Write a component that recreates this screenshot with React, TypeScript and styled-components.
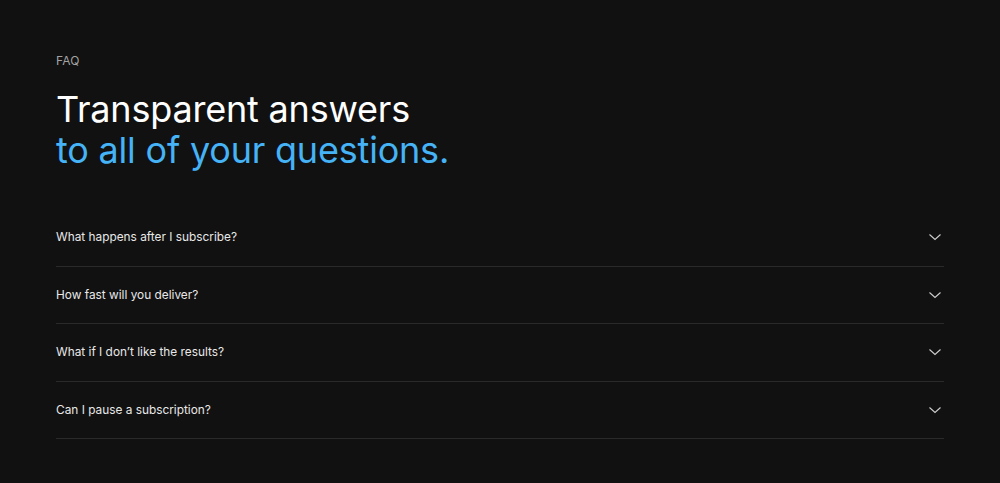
import React from "react";
import styled, { createGlobalStyle } from "styled-components";

const Global = createGlobalStyle`
  html, body { margin: 0; padding: 0; background: #111111; }
  body { font-family: Inter, "Noto Sans", sans-serif; -webkit-font-smoothing: antialiased; }
`;

const Section = styled.section`
  width: 1000px;
  height: 483px;
  box-sizing: border-box;
  background: #111111;
  padding: 53px 56px 0 56px;
`;

const Eyebrow = styled.div`
  font-size: 12px;
  line-height: 16px;
  color: #a3a3a3;
  letter-spacing: 0.2px;
`;

const Heading = styled.h2`
  margin: 20px 0 0 0;
  font-size: 36px;
  font-weight: 400;
  line-height: 41px;
  letter-spacing: -0.2px;
  color: #ffffff;
`;

const Accent = styled.span`
  display: block;
  color: #45b3f6;
`;

const List = styled.div`
  margin-top: 38px;
  display: flex;
  flex-direction: column;
`;

const Row = styled.div`
  height: 57.6px;
  box-sizing: border-box;
  border-bottom: 1px solid #2a2a2a;
  display: flex;
  align-items: center;
  justify-content: space-between;
`;

const Question = styled.span`
  font-size: 11.85px;
  color: #e8e8e8;
  letter-spacing: 0;
`;

const Chevron = styled.svg`
  width: 14px;
  height: 14px;
  margin-right: 2px;
  color: #cfcfcf;
`;

const questions = [
  "What happens after I subscribe?",
  "How fast will you deliver?",
  "What if I don’t like the results?",
  "Can I pause a subscription?",
];

export default function App() {
  return (
    <>
      <Global />
      <Section>
        <Eyebrow>FAQ</Eyebrow>
        <Heading>
          Transparent answers
          <Accent>to all of your questions.</Accent>
        </Heading>
        <List>
          {questions.map((q) => (
            <Row key={q}>
              <Question>{q}</Question>
              <Chevron viewBox="0 0 14 14" fill="none">
                <path d="M1.5 4.5L7 9.5L12.5 4.5" stroke="currentColor" strokeWidth="1.1" />
              </Chevron>
            </Row>
          ))}
        </List>
      </Section>
    </>
  );
}
